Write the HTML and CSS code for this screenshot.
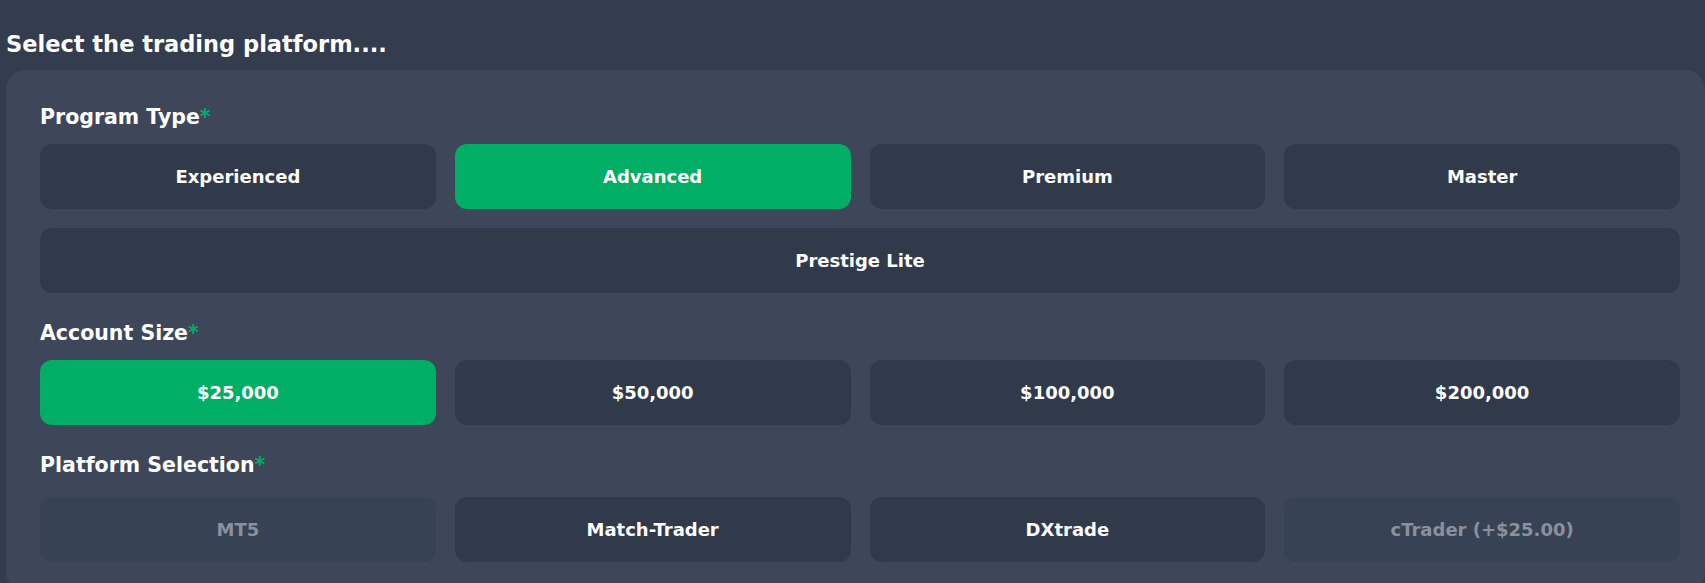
FILE: index.html
```html
<!DOCTYPE html>
<html lang="en">
<head>
<meta charset="utf-8">
<title>Select the trading platform</title>
<link rel="stylesheet" href="styles.css">
</head>
<body>
<div class="page">
  <h2 class="title">Select the trading platform....</h2>
  <div class="panel">
    <div class="section">
      <div class="label">Program Type<span class="req">*</span></div>
      <div class="grid">
        <button class="opt">Experienced</button>
        <button class="opt active">Advanced</button>
        <button class="opt">Premium</button>
        <button class="opt">Master</button>
        <button class="opt wide">Prestige Lite</button>
      </div>
    </div>
    <div class="section">
      <div class="label">Account Size<span class="req">*</span></div>
      <div class="grid">
        <button class="opt active">$25,000</button>
        <button class="opt">$50,000</button>
        <button class="opt">$100,000</button>
        <button class="opt">$200,000</button>
      </div>
    </div>
    <div class="section platform">
      <div class="label">Platform Selection<span class="req">*</span></div>
      <div class="grid">
        <button class="opt disabled">MT5</button>
        <button class="opt">Match-Trader</button>
        <button class="opt">DXtrade</button>
        <button class="opt disabled">cTrader (+$25.00)</button>
      </div>
    </div>
  </div>
</div>
</body>
</html>
```
FILE: styles.css
```css
html, body {
  margin: 0;
  padding: 0;
  background: #333d4e;
  overflow: hidden;
}
body {
  font-family: "DejaVu Sans", "Open Sans", sans-serif;
  color: #ffffff;
}
.page {
  width: 1705px;
  padding-top: 28px;
}
.title {
  margin: 0 0 0 6px;
  font-size: 22.5px;
  font-weight: 700;
  line-height: 32px;
  height: 32px;
  margin-bottom: 10px;
}
.panel {
  margin-left: 6px;
  background: #3d4759;
  border-radius: 20px;
  padding: 33px 25px 30px 34px;
}
.section + .section {
  margin-top: 26px;
}
.label {
  font-size: 20.5px;
  font-weight: 700;
  line-height: 28px;
  margin-bottom: 13px;
}
.platform .label {
  margin-bottom: 18px;
}
.req {
  color: #00ae66;
}
.grid {
  display: grid;
  grid-template-columns: repeat(4, 1fr);
  gap: 19px;
}
.opt {
  height: 65px;
  border: 0;
  border-radius: 12px;
  background: #303a4b;
  color: #ffffff;
  font-family: inherit;
  font-size: 18px;
  font-weight: 700;
  padding: 0;
}
.opt.wide {
  grid-column: 1 / -1;
}
.opt.active {
  background: #00ae66;
}
.opt.disabled {
  background: #384255;
  color: #8a919d;
}
```
